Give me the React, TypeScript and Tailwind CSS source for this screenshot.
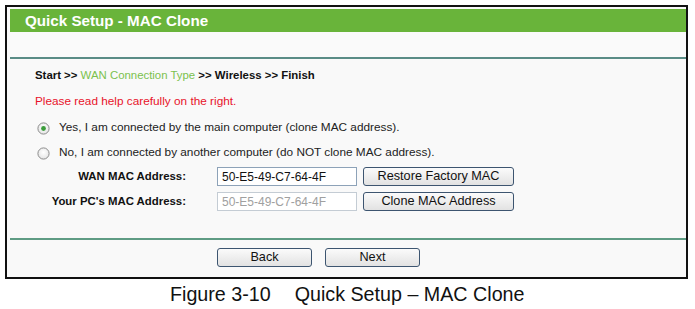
import React from "react";

function Radio({ checked }: { checked?: boolean }) {
  return (
    <svg width="13" height="13" viewBox="0 0 13 13" className="shrink-0">
      <defs>
        <radialGradient id={checked ? "rg1" : "rg2"} cx="50%" cy="40%" r="60%">
          <stop offset="0%" stopColor="#ffffff" />
          <stop offset="100%" stopColor="#e4e4e4" />
        </radialGradient>
      </defs>
      <circle cx="6.5" cy="6.5" r="5.6" fill={`url(#${checked ? "rg1" : "rg2"})`} stroke="#8c8c8c" strokeWidth="1" />
      {checked && <circle cx="6.5" cy="6.5" r="2.4" fill="#3b9c3b" />}
    </svg>
  );
}

function Btn({ children, w }: { children: React.ReactNode; w: string }) {
  return (
    <div
      className={`${w} h-[19px] flex items-center justify-center rounded-[3px] border border-[#3d5570] bg-gradient-to-b from-[#fbfbfb] to-[#e2e2e2] text-[12.7px] text-[#111] leading-none`}
    >
      {children}
    </div>
  );
}

export default function App() {
  return (
    <div
      className="w-[695px] h-[309px] bg-white overflow-hidden"
      style={{ fontFamily: '"Liberation Sans", Arial, sans-serif' }}
    >
      <div className="ml-[5px] mt-[5px] w-[683px] border-2 border-[#111] bg-[#f9f9f9] pl-[3px] pt-[2px] pb-[10px]">
        <div className="h-[23px] bg-[#69b43a] flex items-center pl-[15px]">
          <span className="text-white font-bold text-[15.2px] leading-none">Quick Setup - MAC Clone</span>
        </div>
        <div className="h-[25px] bg-[#fafafa]" />
        <div className="h-[2px] bg-[#5a8c86]" />
        <div className="pl-[25px] pt-[10px]">
          <div className="h-[14px] flex items-center text-[11.4px] text-[#111]">
            <span className="font-bold">Start &gt;&gt;&nbsp;</span>
            <span className="text-[#7bc14e]">WAN Connection Type</span>
            <span className="font-bold">&nbsp;&gt;&gt; Wireless &gt;&gt; Finish</span>
          </div>
          <div className="h-[14px] mt-[12px] flex items-center text-[11.8px] text-[#e8132a]">
            Please read help carefully on the right.
          </div>
        </div>
        <div className="pl-[27px] mt-[12px]">
          <div className="h-[14px] flex items-center text-[11.8px] text-[#222]">
            <Radio checked />
            <span className="ml-[9px]">Yes, I am connected by the main computer (clone MAC address).</span>
          </div>
          <div className="h-[14px] mt-[11px] flex items-center text-[11.8px] text-[#222]">
            <Radio />
            <span className="ml-[9px]">No, I am connected by another computer (do NOT clone MAC address).</span>
          </div>
        </div>
        <div className="mt-[7px]">
          <div className="flex items-center h-[19px]">
            <div className="w-[176px] text-right font-bold text-[11.4px] text-[#111]">WAN MAC Address:</div>
            <div className="ml-[31px] w-[140px] h-[19px] border border-[#8da2b8] bg-white flex items-center pl-[4px] text-[12px] text-[#111]">
              50-E5-49-C7-64-4F
            </div>
            <div className="ml-[6px]">
              <Btn w="w-[151px]">Restore Factory MAC</Btn>
            </div>
          </div>
          <div className="flex items-center h-[19px] mt-[6px]">
            <div className="w-[176px] text-right font-bold text-[11.4px] text-[#111]">Your PC's MAC Address:</div>
            <div className="ml-[31px] w-[140px] h-[19px] border border-[#c4ccd4] bg-white flex items-center pl-[4px] text-[12px] text-[#a0a0a0]">
              50-E5-49-C7-64-4F
            </div>
            <div className="ml-[6px]">
              <Btn w="w-[151px]">Clone MAC Address</Btn>
            </div>
          </div>
        </div>
        <div className="h-[2px] bg-[#5f9c84] mt-[27px]" />
        <div className="flex mt-[8px] pl-[207px] gap-[13px]">
          <Btn w="w-[95px]">Back</Btn>
          <Btn w="w-[95px]">Next</Btn>
        </div>
      </div>
      <div className="mt-[6px] h-[20px] flex items-center pl-[170px] text-[19.7px] text-[#111] leading-none whitespace-pre">
        <span>Figure 3-10</span>
        <span className="ml-[24px]">Quick Setup – MAC Clone</span>
      </div>
    </div>
  );
}
